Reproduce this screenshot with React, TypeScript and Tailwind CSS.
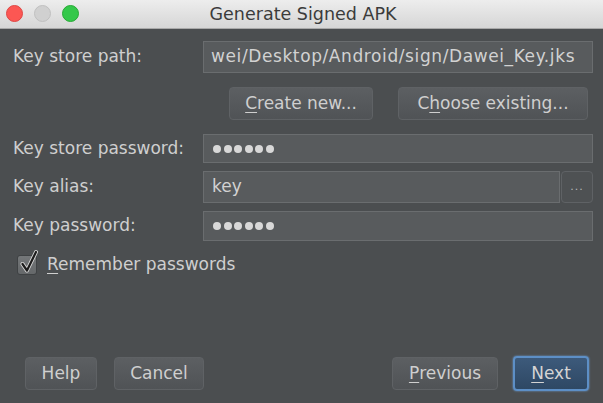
import React from "react";

// Mac-style "Generate Signed APK" dialog from Android Studio (Darcula)

const font = { fontFamily: '"DejaVu Sans", "Liberation Sans", sans-serif' };

const Button = ({ children, className = "" }: { children: React.ReactNode; className?: string }) => (
    <div
        className={
            "h-[33px] flex items-center justify-center rounded-[4px] border border-[#5f6265] bg-gradient-to-b from-[#5c5f62] to-[#505356] text-[17px] text-[#cfcfcf] " +
            className
        }
    >
        {children}
    </div>
);

const Field = ({ children, className = "" }: { children?: React.ReactNode; className?: string }) => (
    <div className={"flex items-center border border-[#6a6d6f] bg-[#585b5d] text-[17px] text-[#d2d2d2] " + className}>
        {children}
    </div>
);

const Dots = () => (
    <div className="flex gap-[2.5px] pl-[9px]">
        {[0, 1, 2, 3, 4, 5].map((i) => (
            <span key={i} className="block h-[8px] w-[8px] rounded-full bg-[#d8d8d8]" />
        ))}
    </div>
);

const Label = ({ children }: { children: React.ReactNode }) => (
    <div className="w-[190px] shrink-0 text-[17px] text-[#cfcfcf]">{children}</div>
);

export default function App() {
    return (
        <div style={font} className="w-[603px] h-[403px] flex flex-col bg-[#4b4e50] overflow-hidden">
            {/* title bar */}
            <div className="relative h-[29px] shrink-0 flex items-center justify-center bg-gradient-to-b from-[#ededed] to-[#d6d6d6] border-b border-[#a9a9a9]">
                <div className="absolute left-[6px] top-[5px] flex gap-[11px]">
                    <span className="block h-[17px] w-[17px] rounded-full bg-[#fc5753] border border-[#df4744]" />
                    <span className="block h-[17px] w-[17px] rounded-full bg-[#d0d0d0] border border-[#c0c0c0]" />
                    <span className="block h-[17px] w-[17px] rounded-full bg-[#34c84a] border border-[#27aa35]" />
                </div>
                <span className="text-[17.5px] text-[#3b3b3b] pl-[3px]">Generate Signed APK</span>
            </div>

            {/* form */}
            <div className="flex flex-col pl-[13px] pr-[10px] pt-[12px]">
                <div className="flex items-center h-[32px]">
                    <Label>Key store path:</Label>
                    <Field className="flex-1 h-full">
                        <span className="pl-[7px] whitespace-nowrap tracking-[0.6px]">wei/Desktop/Android/sign/Dawei_Key.jks</span>
                    </Field>
                </div>

                <div className="flex justify-end gap-[25px] mt-[14px] pr-[5px]">
                    <Button className="w-[144px]">
                        <span className="underline underline-offset-[3px]">C</span>reate new...
                    </Button>
                    <Button className="w-[190px]">
                        C<span className="underline underline-offset-[3px]">h</span>oose existing...
                    </Button>
                </div>

                <div className="flex items-center h-[29px] mt-[14px]">
                    <Label>Key store password:</Label>
                    <Field className="flex-1 h-full">
                        <Dots />
                    </Field>
                </div>

                <div className="flex items-center h-[32px] mt-[8px]">
                    <Label>Key alias:</Label>
                    <Field className="flex-1 h-full">
                        <span className="pl-[8px]">key</span>
                    </Field>
                    <div className="ml-[1px] w-[32px] h-full flex items-center justify-center rounded-[4px] border border-[#5f6265] bg-[#4e5153] text-[11px] text-[#b8b8b8] tracking-[1px]">
                        ...
                    </div>
                </div>

                <div className="flex items-center h-[30px] mt-[8px]">
                    <Label>Key password:</Label>
                    <Field className="flex-1 h-full">
                        <Dots />
                    </Field>
                </div>

                <div className="flex items-center mt-[11px] pl-[4px]">
                    <div className="relative h-[20px] w-[20px] rounded-[3px] border border-[#3f4244] bg-gradient-to-b from-[#747779] to-[#65686a]">
                        <svg className="absolute left-[1px] top-[-7px]" width="20" height="26" viewBox="0 0 20 26">
                            <path d="M3.5 15 L8 21.5 L17 3" fill="none" stroke="#d9d9d9" strokeWidth="4" strokeLinecap="round" strokeLinejoin="round" />
                            <path d="M3.5 15 L8 21.5 L17 3" fill="none" stroke="#1c1c1c" strokeWidth="2.2" strokeLinecap="round" strokeLinejoin="round" />
                        </svg>
                    </div>
                    <span className="ml-[10px] text-[17px] text-[#cfcfcf]">
                        <span className="underline underline-offset-[3px]">R</span>emember passwords
                    </span>
                </div>
            </div>

            {/* footer */}
            <div className="mt-auto flex items-center pb-[12px] pl-[25px] pr-[14px]">
                <Button className="w-[72px]">Help</Button>
                <Button className="w-[90px] ml-[17px]">Cancel</Button>
                <div className="flex-1" />
                <Button className="w-[106px]">
                    <span className="underline underline-offset-[3px]">P</span>revious
                </Button>
                <div className="ml-[15px] h-[35px] w-[76px] flex items-center justify-center rounded-[4px] border-2 border-[#5d8fc6] bg-gradient-to-b from-[#3d5a7b] to-[#2e4864] text-[17px] text-[#d4d4d4] shadow-[0_0_2px_#6fa3dc]">
                    <span className="underline underline-offset-[3px]">N</span>ext
                </div>
            </div>
        </div>
    );
}
